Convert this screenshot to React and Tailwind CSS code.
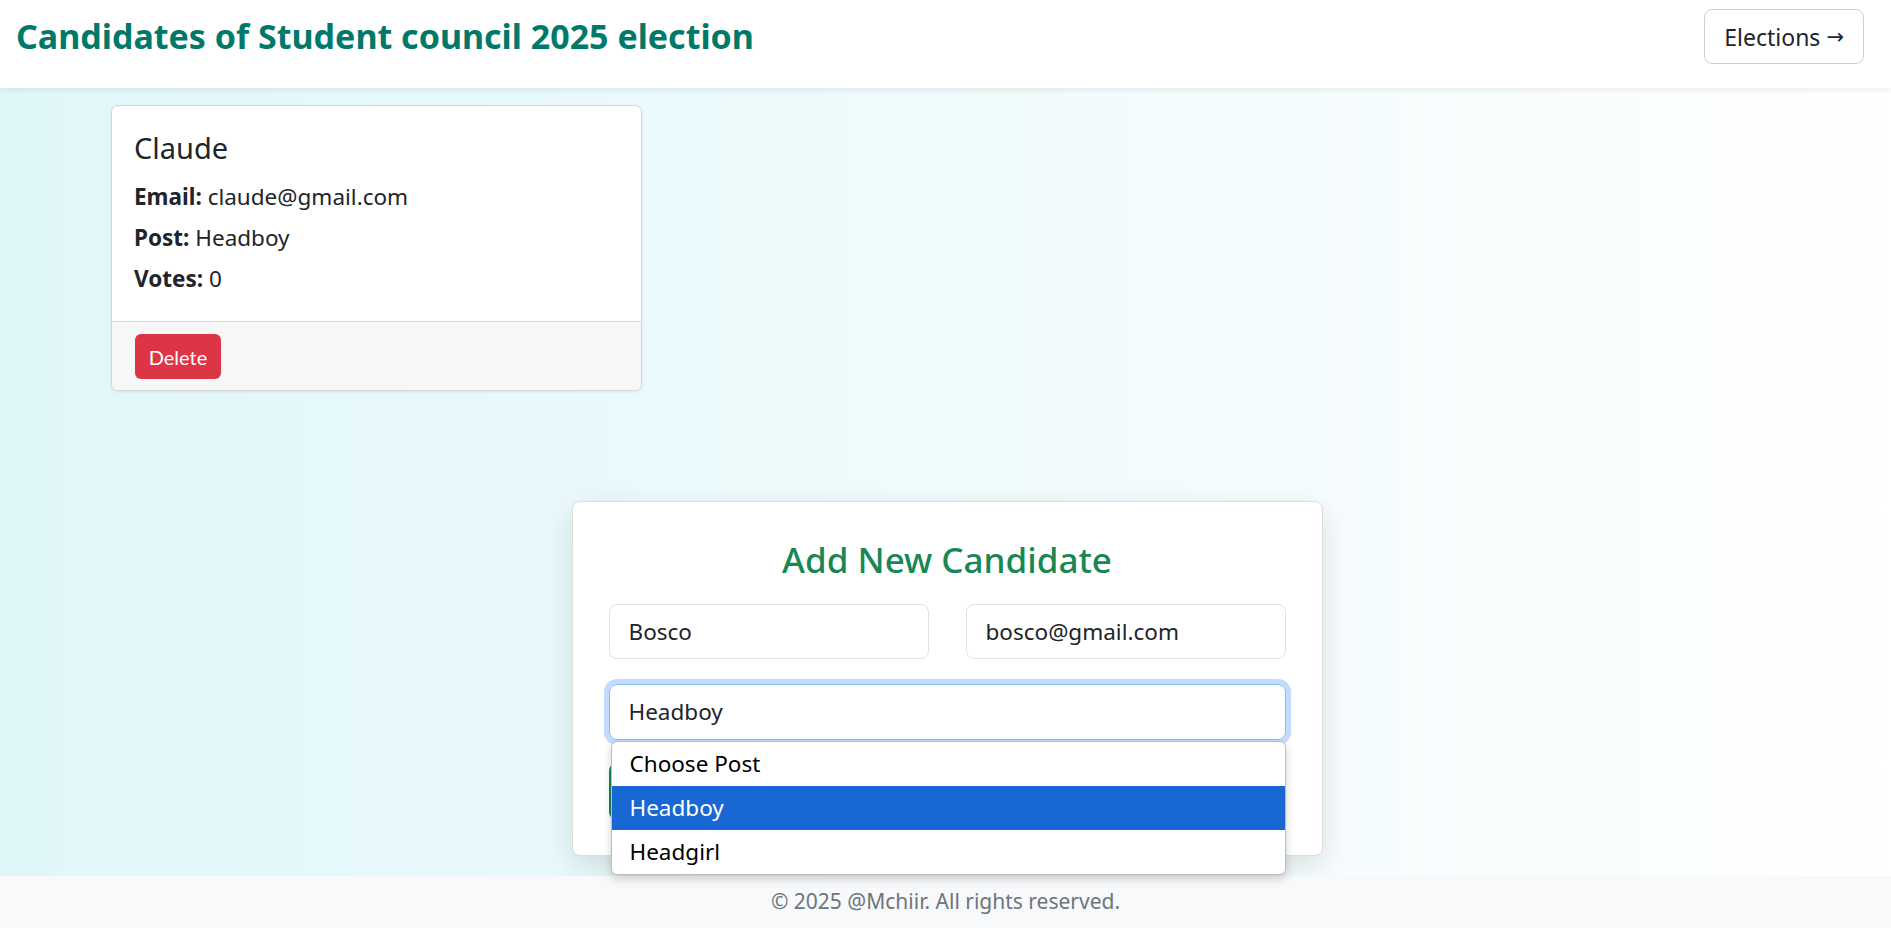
import { useState } from "react";

const posts = ["Choose Post", "Headboy", "Headgirl"];

function CandidateCard({ candidate }) {
  return (
    <div className="w-[531px] rounded-[7px] border border-[#d6d6d6] bg-white shadow-[0_1px_3px_rgba(0,0,0,0.08)]">
      <div className="pt-[26px] pb-[27px] px-[22px] text-[#212529]">
        <h5 className="text-[29px] leading-[32px] mb-[18px]">{candidate.name}</h5>
        <div className="flex flex-col gap-[11px] text-[22.5px] leading-[30px]">
          <p><strong>Email:</strong> {candidate.email}</p>
          <p><strong>Post:</strong> {candidate.post}</p>
          <p><strong>Votes:</strong> {candidate.votes}</p>
        </div>
      </div>
      <div className="border-t border-[#d6d6d6] bg-[#f7f7f7] rounded-b-[7px] pt-[12px] pb-[11px] px-[23px]">
        <button className="w-[86px] h-[45px] rounded-[6px] bg-[#dc3545] text-white text-[20px] font-['Lato']">
          Delete
        </button>
      </div>
    </div>
  );
}

function AddCandidateForm() {
  const [name, setName] = useState("Bosco");
  const [email, setEmail] = useState("bosco@gmail.com");
  const [post] = useState("Headboy");

  return (
    <div className="w-[751px] rounded-[8px] border border-[#dcdcdc] bg-white shadow-[0_10px_30px_rgba(0,0,0,0.12)] pt-[37px] pb-[35px] px-[36px]">
      <h3 className="text-center text-[35px] leading-[42px] font-medium text-[#198754] mb-[23px]">
        Add New Candidate
      </h3>
      <div className="grid grid-cols-2 gap-[37px] mb-[25px]">
        <input
          className="h-[55px] rounded-[8px] border border-[#dee2e6] px-[19px] text-[22.5px] text-[#212529] outline-none"
          value={name}
          onChange={(e) => setName(e.target.value)}
        />
        <input
          className="h-[55px] rounded-[8px] border border-[#dee2e6] px-[19px] text-[22.5px] text-[#212529] outline-none"
          value={email}
          onChange={(e) => setEmail(e.target.value)}
        />
      </div>
      <div className="relative mb-[23px]">
        <div className="h-[56px] flex items-center rounded-[8px] border border-[#86b7fe] shadow-[0_0_0_5px_rgba(13,110,253,0.25)] px-[19px] text-[22.5px] text-[#212529]">
          {post}
        </div>
        <ul className="absolute z-10 left-[2px] top-[57px] w-[675px] bg-white border border-[#bdbdbd] rounded-[6px] shadow-[0_4px_10px_rgba(0,0,0,0.18)] overflow-hidden text-[22.5px]">
          {posts.map((p) => (
            <li
              key={p}
              className={
                p === post
                  ? "h-[44px] flex items-center px-[18px] bg-[#1967d2] text-white"
                  : "h-[44px] flex items-center px-[18px] text-black"
              }
            >
              {p}
            </li>
          ))}
        </ul>
      </div>
      <button className="w-full h-[57px] rounded-[8px] bg-[#198754] text-white text-[22px]">
        Add Candidate
      </button>
    </div>
  );
}

export default function App() {
  const candidates = [{ id: 1, name: "Claude", email: "claude@gmail.com", post: "Headboy", votes: 0 }];

  return (
    <div className="min-h-screen flex flex-col bg-linear-to-r from-[#e0f7fa] to-white font-['Noto_Sans',sans-serif]">
      <header className="h-[88px] bg-white shadow-[0_2px_6px_rgba(0,0,0,0.08)] flex items-center justify-between pl-[16px] pr-[27px] pb-[16px] relative z-10">
        <h1 className="text-[34px] leading-[42px] font-bold text-[#00796b]">
          Candidates of Student council 2025 election
        </h1>
        <button className="h-[55px] px-[19px] flex items-center gap-[6px] leading-none border border-[#cfcfcf] rounded-[8px] bg-white text-[23px] text-[#212529]">
          <span className="pt-[3px]">Elections</span>
          <span className="font-['DejaVu_Sans'] text-[21px] pt-[3px]">→</span>
        </button>
      </header>

      <main className="flex-1 flex flex-col">
        <div className="pl-[111px] pt-[17px]">
          {candidates.map((c) => (
            <CandidateCard key={c.id} candidate={c} />
          ))}
        </div>
        <div className="flex justify-center mt-[110px] pl-[3px]">
          <AddCandidateForm />
        </div>
      </main>

      <footer className="h-[52px] mt-[20px] bg-[#f8f9fa] flex items-center justify-center text-[21px] text-[#6c757d]">
        © 2025 @Mchiir. All rights reserved.
      </footer>
    </div>
  );
}
